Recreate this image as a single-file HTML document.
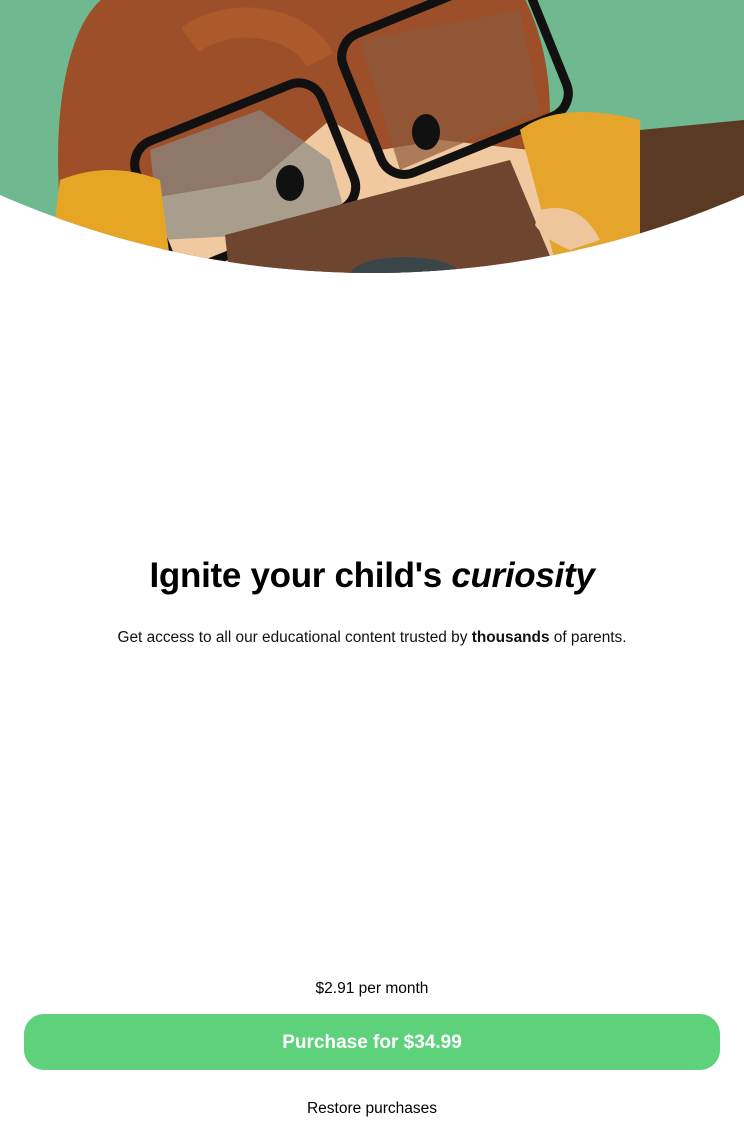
<!DOCTYPE html>
<html><head><style>
body{margin:0;width:744px;height:1130px;background:#fff;font-family:"Liberation Sans",sans-serif;position:relative;overflow:hidden}
svg{position:absolute;left:0;top:0}
h1{position:absolute;top:556px;left:0;width:744px;text-align:center;margin:0;font-size:35px;font-weight:bold;color:#000;letter-spacing:-0.3px}
.sub{position:absolute;top:629px;left:0;width:744px;text-align:center;font-size:15.4px;color:#111}
.price{position:absolute;top:980px;left:0;width:744px;text-align:center;font-size:15.5px;color:#000}
.btn{position:absolute;top:1014px;left:24px;width:696px;height:56px;border-radius:20px;background:#5dd27a;color:#fff;font-size:19px;font-weight:bold;text-align:center;line-height:58px}
.rest{position:absolute;top:1100px;left:0;width:744px;text-align:center;font-size:15.5px;color:#000}
</style></head><body>
<svg width="744" height="280" viewBox="0 0 744 280">
<defs><clipPath id="c"><circle cx="372" cy="-653" r="926"/></clipPath></defs>
<g clip-path="url(#c)">
<rect width="744" height="280" fill="#6fb890"/>
<path d="M70 280 C40 120 70 0 120 -10 L520 -10 C560 60 560 160 520 280 Z" fill="#9c4f28"/>
<path d="M190 40 C230 10 300 20 320 60" stroke="#b8602e" stroke-width="30" fill="none" opacity=".6"/>
<path d="M140 200 L260 180 L330 120 L380 150 L440 140 L530 150 L560 280 L120 280 Z" fill="#f1c9a0"/>
<path d="M150 150 L260 110 L330 160 L350 230 L160 240 Z" fill="#8a8a86" opacity=".7"/>
<path d="M360 40 L520 10 L540 110 L400 170 Z" fill="#8d5a3c" opacity=".7"/>
<rect x="145" y="108" width="200" height="135" rx="25" transform="rotate(-22 245 175)" fill="none" stroke="#111" stroke-width="9"/>
<rect x="355" y="0" width="200" height="150" rx="25" transform="rotate(-22 455 75)" fill="none" stroke="#111" stroke-width="9"/>
<ellipse cx="290" cy="183" rx="14" ry="18" fill="#111"/>
<ellipse cx="426" cy="132" rx="14" ry="18" fill="#111"/>
<path d="M50 260 L60 180 Q110 160 160 180 L170 260 Z" fill="#e7a526"/>
<path d="M520 130 Q560 100 640 120 L650 280 L560 280 Z" fill="#e5a52b"/>
<path d="M640 130 L744 120 L744 280 L640 280 Z" fill="#5a3a22"/>
<path d="M225 235 L510 160 L560 280 L230 280 Z" fill="#6e4630"/>
<path d="M540 210 Q580 200 600 240 L570 250 Q545 240 535 225 Z" fill="#efc59c"/>
<ellipse cx="405" cy="275" rx="55" ry="18" fill="#3a4548"/>
</g>
</svg>
<h1>Ignite your child's <i>curiosity</i></h1>
<div class="sub">Get access to all our educational content trusted by <b>thousands</b> of parents.</div>
<div class="price">$2.91 per month</div>
<div class="btn">Purchase for $34.99</div>
<div class="rest">Restore purchases</div>
</body></html>
